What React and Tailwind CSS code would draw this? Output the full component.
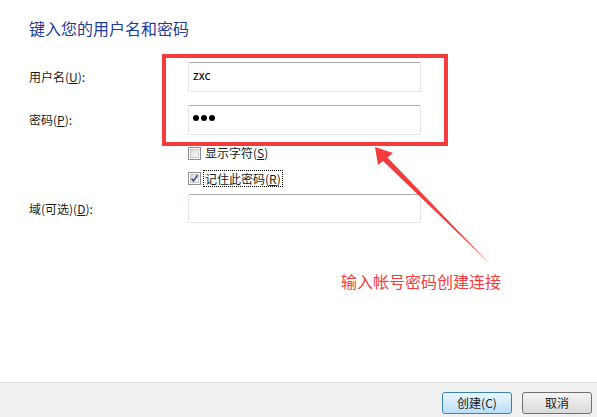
import React from "react";

const font = { fontFamily: '"Noto Sans CJK SC", "Noto Sans", sans-serif' };

function Label({ children }) {
  return (
    <div className="w-[159px] shrink-0 text-[12px] leading-[16px] text-[#1a1a1a]">
      {children}
    </div>
  );
}

function Input({ children, h = "h-[30px]" }) {
  return (
    <div
      className={`w-[233px] ${h} rounded-[2px] border border-[#e1e6ec] border-t-[#acaeb4] bg-white pl-[4px] pt-[4px] text-[12px] leading-[16px] text-black`}
    >
      {children}
    </div>
  );
}

function CheckBox({ checked }) {
  return (
    <div className="w-[13px] h-[13px] border border-[#8f8f8f] bg-white p-[1px] shrink-0">
      <div className="w-full h-full bg-gradient-to-br from-[#dcdcdc] to-[#fbfbfb] border border-[#c9c9c9] relative">
        {checked && (
          <svg viewBox="0 0 9 9" className="absolute left-[-1px] top-[-1px] w-[9px] h-[9px]">
            <path d="M1.5 4.5 L3.5 7 L7.5 1.2" fill="none" stroke="#3c4f8c" strokeWidth="1.6" />
          </svg>
        )}
      </div>
    </div>
  );
}

export default function App() {
  return (
    <div className="relative w-[597px] h-[417px] bg-white flex flex-col overflow-hidden" style={font}>
      <div className="flex-1 pl-[29px]">
        <div className="mt-[18px] h-[20px] text-[16px] leading-[20px] text-[#1f3c96]">
          键入您的用户名和密码
        </div>
        <div className="mt-[24px] flex items-center">
          <Label>
            用户名(<span className="underline">U</span>):
          </Label>
          <div className="pt-[0px]">
            <Input>zxc</Input>
          </div>
        </div>
        <div className="mt-[13px] flex items-center">
          <Label>
            密码(<span className="underline">P</span>):
          </Label>
          <Input>
            <div className="flex gap-[2px] mt-[5px]">
              <div className="w-[6px] h-[6px] rounded-full bg-black" />
              <div className="w-[6px] h-[6px] rounded-full bg-black" />
              <div className="w-[6px] h-[6px] rounded-full bg-black" />
            </div>
          </Input>
        </div>
        <div className="mt-[10px] h-[16px] pl-[159px] flex items-center gap-[3px]">
          <CheckBox />
          <span className="text-[12px] leading-[16px] text-[#1a1a1a] px-[1px]">
            显示字符(<span className="underline">S</span>)
          </span>
        </div>
        <div className="mt-[8px] h-[18px] pl-[159px] flex items-center gap-[2px]">
          <CheckBox checked />
          <span className="text-[12px] leading-[15px] text-[#1a1a1a] px-[1px] border border-dotted border-black">
            记住此密码(<span className="underline">R</span>)
          </span>
        </div>
        <div className="mt-[7px] flex items-center">
          <Label>
            域(可选)(<span className="underline">D</span>):
          </Label>
          <Input h="h-[29px]" />
        </div>
      </div>

      <div className="h-[35px] border-t border-[#dfdfdf] bg-[#f0f0f0] flex justify-end items-start pt-[9px] pr-[5px] gap-[10px]">
        <div className="w-[70px] h-[22px] rounded-[3px] border border-[#3c7fb1] bg-gradient-to-b from-[#eaf6fd] to-[#b9def6] flex items-center justify-center text-[12px] text-[#1a1a1a]">
          创建(C)
        </div>
        <div className="w-[70px] h-[22px] rounded-[3px] border border-[#707070] bg-gradient-to-b from-[#f4f4f4] to-[#dadada] flex items-center justify-center text-[12px] text-[#1a1a1a]">
          取消
        </div>
      </div>

      {/* annotations */}
      <div className="absolute left-[162px] top-[54px] w-[286px] h-[92px] border-[4px] border-[#f43c3c]" />
      <svg className="absolute left-0 top-0 w-[597px] h-[417px] pointer-events-none" viewBox="0 0 597 417">
        <polygon
          points="375,147 393,153 387.5,157.5 489,263 383,161 378,165"
          fill="#f43c3c"
        />
      </svg>
      <div className="absolute left-[341px] top-[271px] text-[16px] leading-[20px] text-[#f43c3c]">
        输入帐号密码创建连接
      </div>
    </div>
  );
}
